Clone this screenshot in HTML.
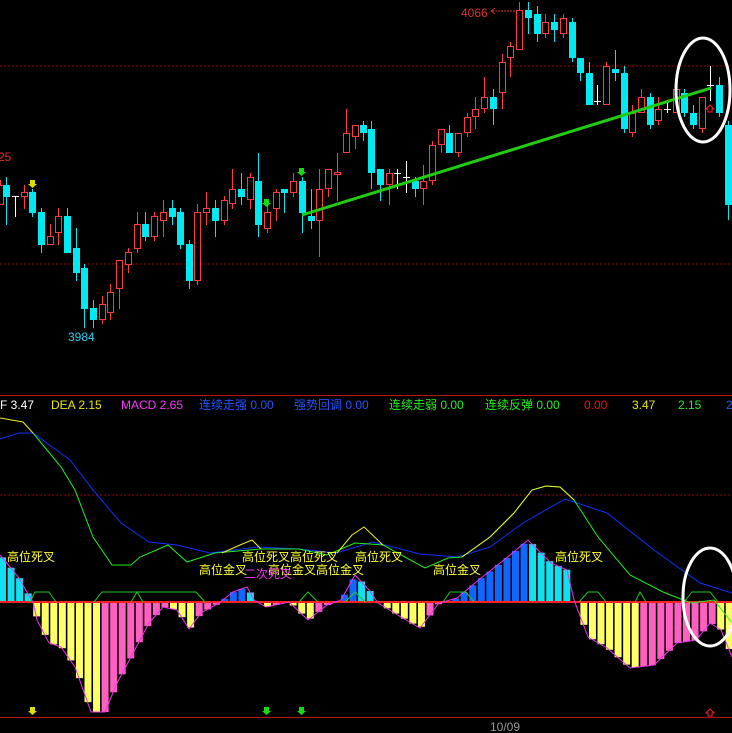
<!DOCTYPE html>
<html><head><meta charset="utf-8"><style>
html,body{margin:0;padding:0;background:#000;width:732px;height:733px;overflow:hidden}
svg{display:block}
text{font-family:"Liberation Sans","Noto Sans CJK SC",sans-serif}
</style></head><body>
<svg id="s" width="732" height="733" xmlns="http://www.w3.org/2000/svg">
<rect width="732" height="733" fill="#000"/>
<line x1="0" y1="66" x2="732" y2="66" stroke="#a00000" stroke-dasharray="2,2"/>
<line x1="0" y1="264" x2="732" y2="264" stroke="#a00000" stroke-dasharray="2,2"/>
<g id="candles"></g>
<line x1="302" y1="215" x2="711" y2="88" stroke="#22cc11" stroke-width="3"/>
<ellipse cx="703" cy="90" rx="27" ry="52" fill="none" stroke="#fff" stroke-width="3"/>
<text x="461" y="17" fill="#e03030" font-size="12">4066</text>
<line x1="492" y1="11" x2="515" y2="11" stroke="#e03030" stroke-dasharray="2,1"/>
<path d="M491 11l4-3M491 11l4 3" stroke="#e03030"/>
<text x="68" y="341" fill="#33ccee" font-size="12">3984</text>
<text x="-2" y="161" fill="#e03030" font-size="12">25</text>
<path d="M30 180h5v4h2l-4.5 4-4.5-4h2z" fill="#dddd00"/>
<path d="M264 199h5v4h2l-4.5 4-4.5-4h2z" fill="#11dd11"/>
<path d="M299 168h5v4h2l-4.5 4-4.5-4h2z" fill="#11dd11"/>
<path d="M708 112v-3h-2l4-4 4 4h-2v3z" fill="none" stroke="#ff2020"/>
<!-- lower panel -->
<line x1="0" y1="395.5" x2="732" y2="395.5" stroke="#c01010"/>
<g font-size="12">
<text x="0" y="409" fill="#fff">F 3.47</text>
<text x="51" y="409" fill="#e8e800">DEA 2.15</text>
<text x="121" y="409" fill="#ff33ff">MACD 2.65</text>
<text x="199" y="409" fill="#2255ff">连续走强 0.00</text>
<text x="294" y="409" fill="#2255ff">强势回调 0.00</text>
<text x="389" y="409" fill="#22ee22">连续走弱 0.00</text>
<text x="485" y="409" fill="#22ee22">连续反弹 0.00</text>
<text x="584" y="409" fill="#ee1111">0.00</text>
<text x="632" y="409" fill="#e8e800">3.47</text>
<text x="678" y="409" fill="#22ee22">2.15</text>
<text x="726" y="409" fill="#2255ff">2</text>
</g>
<line x1="0" y1="495" x2="732" y2="495" stroke="#a00000" stroke-dasharray="2,2"/>
<g id="hist"></g>
<line x1="0" y1="602" x2="732" y2="602" stroke="#ff2020" stroke-width="2"/>
<polyline id="env" fill="none" stroke="#ee33ee" stroke-width="1"/>
<polyline fill="none" stroke="#22cc22" points="30,602 35,592 49,592 56,602 M0,0" />
<polyline fill="none" stroke="#22cc22" points="94,602 102,592 196,592 205,602"/>
<polyline fill="none" stroke="#22cc22" points="131,602 137,592 143,602"/>
<polyline fill="none" stroke="#22cc22" points="299,602 308,592 318,602"/>
<polyline fill="none" stroke="#22cc22" points="345,602 355,592 365,602"/>
<polyline fill="none" stroke="#22cc22" points="443,602 450,592 466,592 474,602"/>
<polyline fill="none" stroke="#22cc22" points="579,602 588,592 598,592 606,602"/>
<polyline fill="none" stroke="#22cc22" points="635,602 640,592 646,602"/>
<polyline fill="none" stroke="#22cc22" points="684,602 692,592 710,592 718,602"/>
<polyline id="blue" fill="none" stroke="#1030ff" points="0,439 19,433 33,433 70,460 93,490 121,523 149,542 177,545 210,553 257,547 299,549 336,553 373,542 420,554 457,557 490,547 523,523 565,499 607,513 654,550 700,583 732,593"/>
<polyline fill="none" stroke="#22ee22" points="33,433 47,450 61,467 75,490 93,537 112,565 131,565 140,557 168,545 187,562 215,553 261,549 299,549 327,555 355,543 383,545 425,568 448,558 462,557 490,537 514,513 532,490 546,486 560,487 574,500 598,537 630,575 663,592 691,603 714,600 732,623"/>
<polyline fill="none" stroke="#eeee22" points="0,418 23,422 33,433"/>
<polyline fill="none" stroke="#eeee22" points="222,553 240,545 252,540 261,549"/>
<polyline fill="none" stroke="#eeee22" points="337,553 352,535 364,527 383,545"/>
<polyline fill="none" stroke="#eeee22" points="462,557 490,537 514,513 532,490 546,486 560,487 574,500"/>
<g font-size="12" fill="#ffff33">
<text x="7" y="561">高位死叉</text>
<text x="242" y="561">高位死叉高位死叉</text>
<text x="355" y="561">高位死叉</text>
<text x="555" y="561">高位死叉</text>
<text x="199" y="574">高位金叉</text>
<text x="268" y="574">高位金叉高位金叉</text>
<text x="433" y="574">高位金叉</text>
<text x="244" y="578" fill="#ee33ee">二次死叉</text>
</g>
<ellipse cx="710" cy="597" rx="27" ry="49" fill="none" stroke="#fff" stroke-width="3"/>
<line x1="0" y1="717.5" x2="732" y2="717.5" stroke="#c01010"/>
<text x="490" y="731" fill="#999" font-size="12">10/09</text>
<path d="M30 707h5v4h2l-4.5 4-4.5-4h2z" fill="#dddd00"/>
<path d="M264 707h5v4h2l-4.5 4-4.5-4h2z" fill="#11dd11"/>
<path d="M299 707h5v4h2l-4.5 4-4.5-4h2z" fill="#11dd11"/>
<path d="M708 716v-3h-2l4-4 4 4h-2v3z" fill="none" stroke="#ff2020"/>
</svg>
<script>
var NS="http://www.w3.org/2000/svg";
function el(p,t,a){var e=document.createElementNS(NS,t);for(var k in a)e.setAttribute(k,a[k]);p.appendChild(e);return e;}
// x, color(c/r/w), bodyTop, bodyBot, wickTop, wickBot
var C=[[0,'r',185,205,180,205],[6,'c',185,197,177,225],[15,'w',196,196,196,217],[24,'r',192,197,185,209],[32,'c',192,213,189,217],[41,'c',212,245,208,253],[50,'r',236,245,224,245],[58,'r',216,233,208,245],[67,'c',216,253,208,253],[76,'c',248,273,228,281],[84,'c',268,309,264,328],[93,'c',308,320,300,328],[102,'r',304,320,296,324],[110,'r',292,313,284,320],[119,'r',260,289,260,309],[128,'r',252,265,248,273],[137,'r',224,249,212,253],[145,'c',224,237,212,241],[154,'r',216,237,212,241],[163,'r',212,221,200,237],[172,'c',208,217,200,225],[180,'c',212,245,208,249],[189,'c',244,281,240,289],[197,'r',212,281,204,285],[206,'r',208,213,192,225],[215,'c',208,221,200,237],[224,'r',200,221,196,225],[232,'r',189,204,169,209],[241,'c',189,197,173,205],[250,'r',177,200,173,209],[258,'c',181,225,153,237],[267,'r',212,229,200,233],[276,'r',192,209,189,221],[284,'c',189,193,189,213],[293,'r',181,193,173,197],[302,'c',181,213,177,233],[311,'c',216,221,189,229],[319,'r',189,221,169,257],[328,'r',169,189,169,197],[337,'r',172,175,153,201],[346,'r',133,153,109,153],[355,'r',125,137,125,149],[363,'c',125,133,121,141],[371,'c',129,173,121,189],[380,'c',169,185,169,201],[389,'r',173,185,169,205],[397,'w',173,173,169,189],[406,'w',177,177,161,193],[415,'c',181,189,177,197],[423,'r',181,189,165,205],[432,'r',145,181,141,185],[441,'r',129,145,129,153],[449,'c',133,153,125,153],[458,'r',133,153,133,157],[467,'r',117,133,113,137],[475,'r',109,117,97,129],[484,'r',97,109,77,113],[493,'c',97,109,89,125],[502,'r',62,93,54,109],[510,'r',46,58,42,77],[519,'r',10,50,2,50],[528,'c',10,18,2,34],[537,'c',14,34,6,42],[545,'r',22,34,14,38],[554,'c',22,30,14,42],[563,'r',18,34,14,38],[572,'c',22,58,18,62],[580,'c',58,73,58,81],[589,'c',73,105,62,105],[597,'w',101,101,85,105],[606,'r',66,105,62,105],[615,'c',69,73,50,81],[624,'c',73,129,66,133],[632,'r',113,133,105,137],[641,'r',97,113,89,113],[650,'c',97,125,93,129],[658,'r',109,121,97,125],[667,'w',109,109,101,113],[676,'r',89,113,89,113],[684,'c',93,113,89,117],[693,'c',113,125,105,129],[702,'r',97,129,97,133],[710,'w',85,85,66,101],[719,'c',85,113,77,117],[728,'c',125,205,121,220]];
var g=document.getElementById('candles');
C.forEach(function(d){var x=d[0],col=d[1]=='c'?'#00e8f0':d[1]=='r'?'#ff3b3b':'#ffffff';
el(g,'line',{x1:x+.5,x2:x+.5,y1:d[4],y2:d[5],stroke:col});
if(d[1]=='w'){el(g,'line',{x1:x-3,x2:x+4,y1:d[2]+.5,y2:d[2]+.5,stroke:col});}
else if(d[1]=='c'){el(g,'rect',{x:x-3,y:d[2],width:7,height:Math.max(1,d[3]-d[2]),fill:col});}
else{el(g,'rect',{x:x-2.5,y:d[2]+.5,width:6,height:Math.max(1,d[3]-d[2]-1),fill:'#000',stroke:col});}
});
var E=[[0,555],[10,567],[19,578],[28,594],[33,602],[37,620],[49,643],[61,647],[75,667],[91,712],[105,712],[117,683],[131,657],[149,623],[163,607],[177,610],[189,629],[201,613],[219,603],[233,592],[247,587],[254,600],[266,607],[289,602],[308,620],[327,605],[341,600],[355,575],[369,590],[378,603],[401,617],[420,628],[439,603],[457,598],[481,578],[504,560],[528,540],[551,563],[567,570],[574,600],[588,637],[607,648],[630,668],[654,665],[677,643],[696,640],[710,623],[721,630],[732,657]];
document.getElementById('env').setAttribute('points',E.map(function(p){return p.join(',')}).join(' '));
function f(x){for(var i=0;i<E.length-1;i++){if(x>=E[i][0]&&x<=E[i+1][0]){var t=(x-E[i][0])/(E[i+1][0]-E[i][0]||1);return E[i][1]+t*(E[i+1][1]-E[i][1]);}}return 602;}
var h=document.getElementById('hist');var prev=f(0);
for(var x=2;x<732;x+=8.55){var y=f(x);var col;
if(y<602){col=(y<prev)?'#1166ff':'#11e0f0';el(h,'rect',{x:x-3,y:y,width:7,height:602-y,fill:col});}
else{col=(y>prev)?'#ffff66':'#ff5fc0';el(h,'rect',{x:x-3,y:602,width:7,height:y-602,fill:col});}
prev=y;}
</script>
</body></html>
